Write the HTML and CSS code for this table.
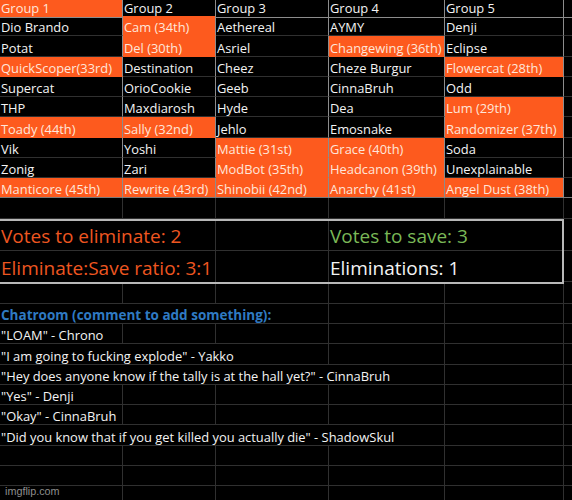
FILE: index.html
```html
<!DOCTYPE html>
<html>
<head>
<meta charset="utf-8">
<link rel="stylesheet" href="styles.css">
</head>
<body>
<div class="sheet">
  <div class="row head t">
    <div class="c o">Group 1</div><div class="c">Group 2</div><div class="c">Group 3</div><div class="c">Group 4</div><div class="c">Group 5</div><div class="c x"></div>
  </div>
  <div class="row t">
    <div class="c">Dio Brando</div><div class="c o">Cam (34th)</div><div class="c">Aethereal</div><div class="c">AYMY</div><div class="c">Denji</div><div class="c x"></div>
  </div>
  <div class="row t">
    <div class="c">Potat</div><div class="c o">Del (30th)</div><div class="c">Asriel</div><div class="c o">Changewing (36th)</div><div class="c">Eclipse</div><div class="c x"></div>
  </div>
  <div class="row t">
    <div class="c o">QuickScoper(33rd)</div><div class="c">Destination</div><div class="c">Cheez</div><div class="c">Cheze Burgur</div><div class="c o">Flowercat (28th)</div><div class="c x"></div>
  </div>
  <div class="row t">
    <div class="c">Supercat</div><div class="c">OrioCookie</div><div class="c">Geeb</div><div class="c">CinnaBruh</div><div class="c">Odd</div><div class="c x"></div>
  </div>
  <div class="row t">
    <div class="c">THP</div><div class="c">Maxdiarosh</div><div class="c">Hyde</div><div class="c">Dea</div><div class="c o">Lum (29th)</div><div class="c x"></div>
  </div>
  <div class="row t">
    <div class="c o">Toady (44th)</div><div class="c o">Sally (32nd)</div><div class="c">Jehlo</div><div class="c">Emosnake</div><div class="c o">Randomizer (37th)</div><div class="c x"></div>
  </div>
  <div class="row t">
    <div class="c">Vik</div><div class="c">Yoshi</div><div class="c o">Mattie (31st)</div><div class="c o">Grace (40th)</div><div class="c">Soda</div><div class="c x"></div>
  </div>
  <div class="row t">
    <div class="c">Zonig</div><div class="c">Zari</div><div class="c o">ModBot (35th)</div><div class="c o">Headcanon (39th)</div><div class="c">Unexplainable</div><div class="c x"></div>
  </div>
  <div class="row t last">
    <div class="c o">Manticore (45th)</div><div class="c o">Rewrite (43rd)</div><div class="c o">Shinobii (42nd)</div><div class="c o">Anarchy (41st)</div><div class="c o">Angel Dust (38th)</div><div class="c x"></div>
  </div>
  <div class="row">
    <div class="c"></div><div class="c"></div><div class="c"></div><div class="c"></div><div class="c"></div><div class="c x"></div>
  </div>

  <div class="boxwrap">
    <div class="box">
      <div class="brow">
        <div class="c s2 red">Votes to eliminate: 2</div><div class="c"></div><div class="c s2 green">Votes to save: 3</div>
      </div>
      <div class="brow">
        <div class="c s2 red">Eliminate:Save ratio: 3:1</div><div class="c"></div><div class="c s2">Eliminations: 1</div>
      </div>
    </div>
    <div class="filler">
      <div class="fcell"></div>
      <div class="fcell"></div>
    </div>
  </div>

  <div class="row">
    <div class="c"></div><div class="c"></div><div class="c"></div><div class="c"></div><div class="c"></div><div class="c x"></div>
  </div>
  <div class="row">
    <div class="c s3 chat">Chatroom (comment to add something):</div><div class="c"></div><div class="c"></div><div class="c x"></div>
  </div>
  <div class="row">
    <div class="c">"LOAM" - Chrono</div><div class="c"></div><div class="c"></div><div class="c"></div><div class="c"></div><div class="c x"></div>
  </div>
  <div class="row">
    <div class="c s3">"I am going to fucking explode" - Yakko</div><div class="c"></div><div class="c"></div><div class="c x"></div>
  </div>
  <div class="row">
    <div class="c s4">"Hey does anyone know if the tally is at the hall yet?" - CinnaBruh</div><div class="c"></div><div class="c x"></div>
  </div>
  <div class="row">
    <div class="c">"Yes" - Denji</div><div class="c"></div><div class="c"></div><div class="c"></div><div class="c"></div><div class="c x"></div>
  </div>
  <div class="row">
    <div class="c">"Okay" - CinnaBruh</div><div class="c"></div><div class="c"></div><div class="c"></div><div class="c"></div><div class="c x"></div>
  </div>
  <div class="row">
    <div class="c s4">"Did you know that if you get killed you actually die" - ShadowSkul</div><div class="c"></div><div class="c x"></div>
  </div>
  <div class="row">
    <div class="c"></div><div class="c"></div><div class="c"></div><div class="c"></div><div class="c"></div><div class="c x"></div>
  </div>
  <div class="row">
    <div class="c"></div><div class="c"></div><div class="c"></div><div class="c"></div><div class="c"></div><div class="c x"></div>
  </div>
  <div class="row">
    <div class="c"></div><div class="c"></div><div class="c"></div><div class="c"></div><div class="c"></div><div class="c x"></div>
  </div>
</div>
<div class="wm">imgflip.com</div>
</body>
</html>
```

FILE: styles.css
```css
html, body {
  margin: 0;
  padding: 0;
  background: #000;
}
body {
  width: 572px;
  height: 500px;
  overflow: hidden;
  position: relative;
  font-family: "Open Sans", "DejaVu Sans", sans-serif;
  font-size: 12.9px;
  color: #f4f4f4;
}
.sheet {
  display: flex;
  flex-direction: column;
}
.row {
  display: grid;
  grid-template-columns: 123px 93px 113px 116px 119px 1fr;
  height: 20.25px;
  flex: none;
}
.c {
  box-sizing: border-box;
  border-right: 1px solid #303030;
  border-bottom: 1px solid #303030;
  padding: 0 0 0 1px;
  display: flex;
  align-items: flex-end;
  white-space: nowrap;
  line-height: 16px;
  min-width: 0;
}
.c.x {
  border-right: none;
}
.s2 { grid-column: span 2; }
.s3 { grid-column: span 3; }
.s4 { grid-column: span 4; }

.head {
  height: 16px;
}
.head .c {
  padding-bottom: 1px;
  border-bottom-color: #8c8c8c;
}
.t .c {
  border-right-color: #8c8c8c;
}
.t .c.x {
  border-right: none;
}
.o {
  background: #fd5a1e;
  color: #ffe6da;
  border-bottom-color: #fd5a1e;
}
.head .o {
  border-bottom-color: #8c8c8c;
}
.last .c {
  border-bottom-color: #7a7a7a;
}

.boxwrap {
  display: grid;
  grid-template-columns: 564px 1fr;
  flex: none;
}
.box {
  box-sizing: border-box;
  border-top: 2px solid #b8b8b8;
  border-bottom: 2px solid #b8b8b8;
  border-right: 2px solid #b8b8b8;
}
.brow {
  display: grid;
  grid-template-columns: 123px 93px 113px 116px 1fr;
  height: 30.5px;
  font-size: 19px;
}
.brow .c {
  line-height: 26px;
  padding-bottom: 1px;
}
.brow .c:last-child {
  border-right: none;
}
.brow:last-child .c {
  border-bottom: none;
}
.filler {
  display: flex;
  flex-direction: column;
  padding: 2px 0;
}
.fcell {
  height: 30.5px;
  box-sizing: border-box;
  border-bottom: 1px solid #303030;
}
.red {
  color: #ee5620;
}
.green {
  color: #7ab857;
}
.chat {
  color: #2f7ac3;
  font-weight: 700;
  font-size: 13.5px;
}
.wm {
  position: absolute;
  left: 5px;
  top: 485px;
  font-family: "Liberation Sans", Arial, sans-serif;
  font-size: 10.8px;
  color: #8e8e8e;
}
```
